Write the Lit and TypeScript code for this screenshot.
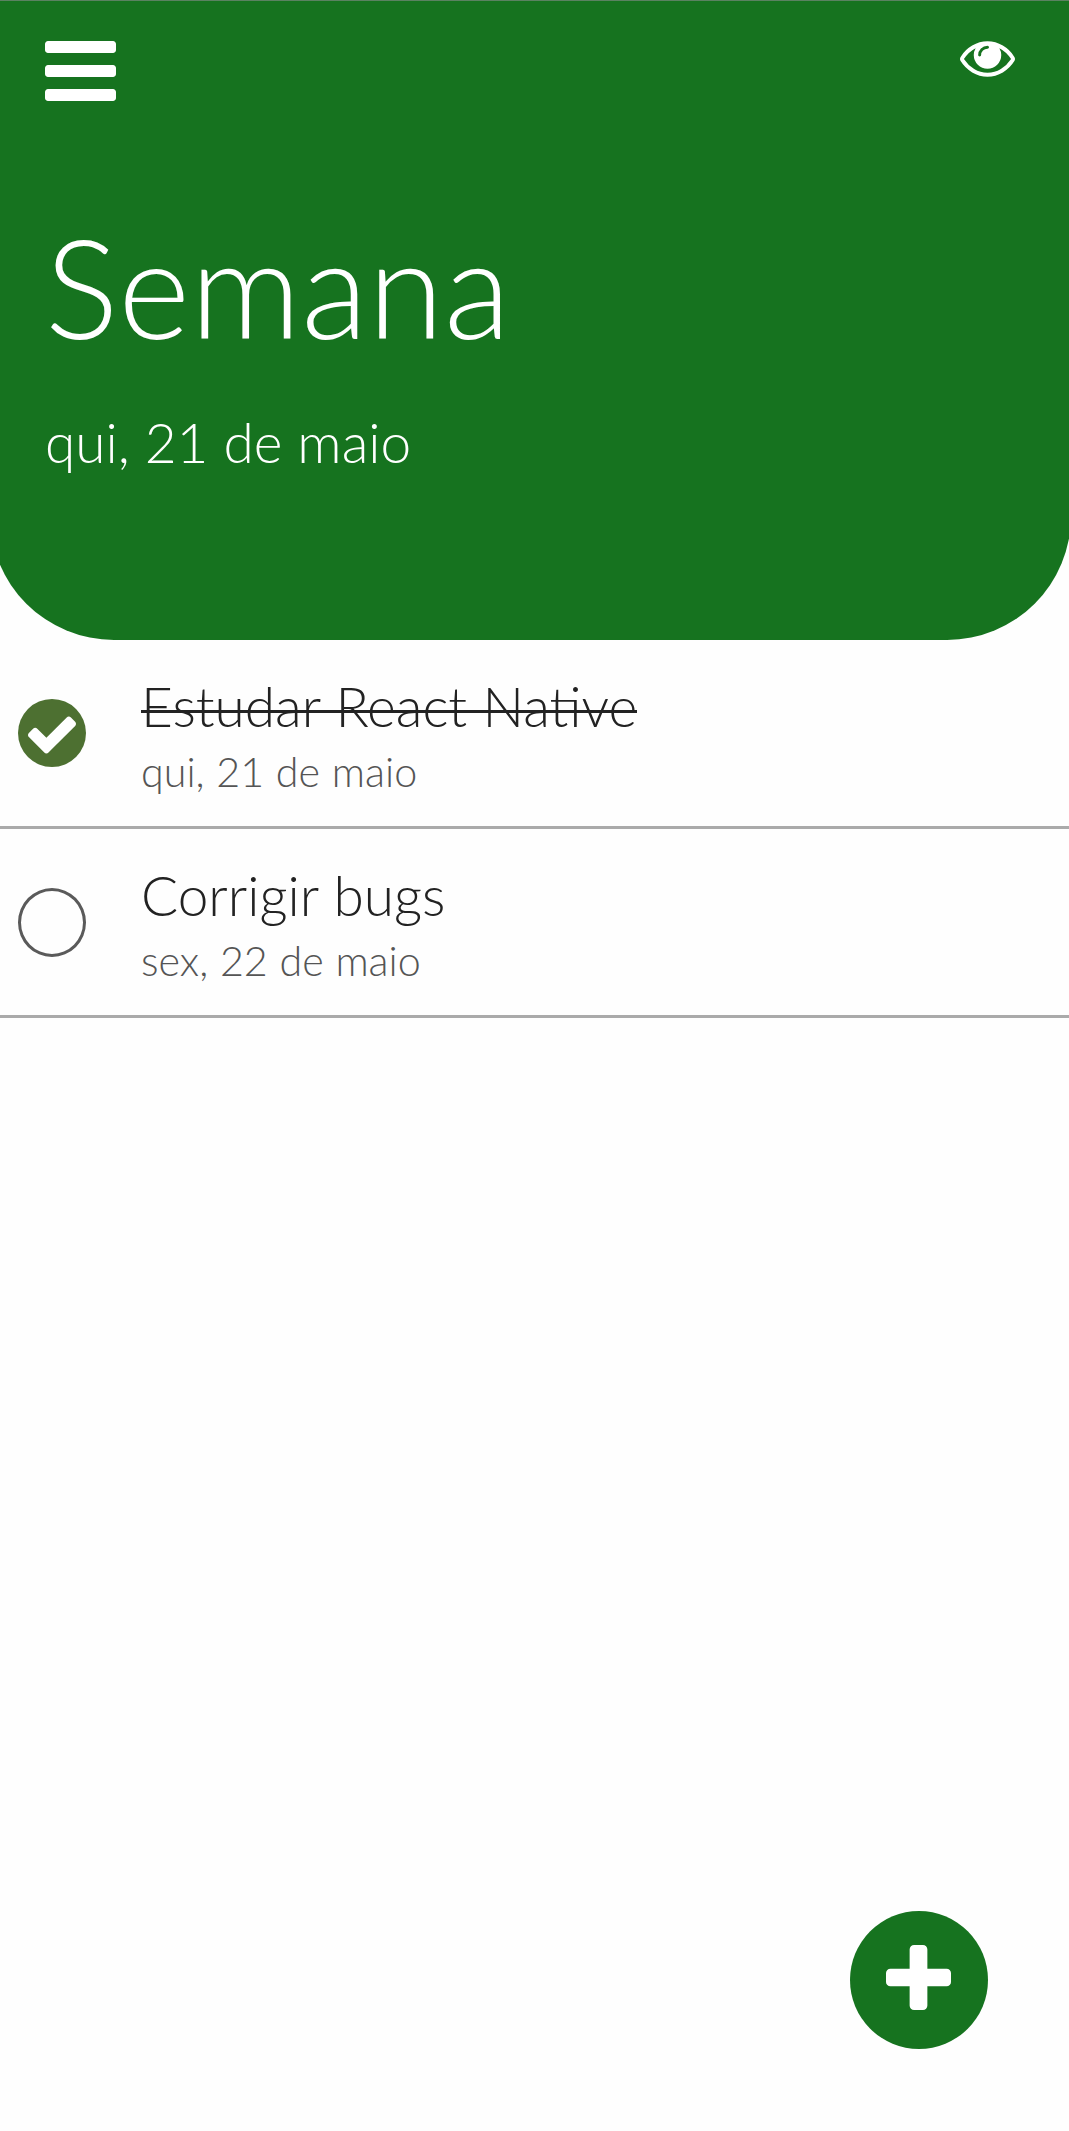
import { LitElement, html, css, nothing } from "lit";
import { customElement, property, state } from "lit/decorators.js";

interface Task {
  id: number;
  desc: string;
  date: string;
  done: boolean;
}

@customElement("task-row")
class TaskRow extends LitElement {
  @property({ attribute: false }) task!: Task;

  static styles = css`
    :host {
      display: block;
    }
    .row {
      box-sizing: border-box;
      height: 189px;
      display: flex;
      align-items: center;
      border-bottom: 3px solid #aaa;
    }
    .check {
      flex: none;
      width: 141px;
      padding-left: 18px;
      box-sizing: border-box;
    }
    .mark {
      box-sizing: border-box;
      width: 68px;
      height: 68px;
      border-radius: 50%;
      display: flex;
      align-items: center;
      justify-content: center;
    }
    .pending {
      height: 69px;
      border: 3px solid #5a5a5a;
    }
    .done {
      background: #4d7031;
    }
    .tick {
      display: block;
      width: 48px;
      height: 38px;
      margin-top: 3px;
      fill: #fff;
    }
    .text {
      display: flex;
      flex-direction: column;
      align-items: flex-start;
      padding-top: 3px;
      word-spacing: 0.5px;
    }
    .desc {
      font-size: 55px;
      line-height: 66px;
      color: #222;
      white-space: pre;
    }
    .struck {
      background: linear-gradient(#222, #222) 0 37px / 100% 3px no-repeat;
    }
    .date {
      margin-top: 7px;
      font-size: 41.25px;
      line-height: 50px;
      color: #555;
      white-space: pre;
    }
  `;

  render() {
    const { desc, date, done } = this.task;
    return html`
      <div class="row">
        <div class="check">
          <div class="mark ${done ? "done" : "pending"}">
            ${done
              ? html`<svg class="tick" viewBox="121 334 1550 1188">
                  <path
                    d="M1671 566q0 40-28 68l-724 724-136 136q-28 28-68 28t-68-28l-136-136-362-362q-28-28-28-68t28-68l136-136q28-28 68-28t68 28l294 295 656-657q28-28 68-28t68 28l136 136q28 28 28 68z"
                  />
                </svg>`
              : nothing}
          </div>
        </div>
        <div class="text">
          <span class="desc ${done ? "struck" : ""}">${desc}</span>
          <span class="date">${date}</span>
        </div>
      </div>
    `;
  }
}

@customElement("app-root")
class AppRoot extends LitElement {
  @state() private tasks: Task[] = [
    { id: 1, desc: "Estudar React Native", date: "qui, 21 de maio", done: true },
    { id: 2, desc: "Corrigir bugs", date: "sex, 22 de maio", done: false },
  ];

  static styles = css`
    :host {
      display: block;
      position: relative;
      height: 2131px;
      overflow: hidden;
      background: #fefefe;
      font-family: Lato, sans-serif;
      font-weight: 300;
    }
    .header {
      box-sizing: border-box;
      height: 640px;
      margin: 0 -2px 0 -10px;
      padding: 40px 56px 0 55px;
      border-top: 1px solid #5b8261;
      border-radius: 0 0 124px 124px;
      background: #16731f;
      color: #fff;
    }
    .bar {
      display: flex;
      justify-content: space-between;
      align-items: flex-start;
      height: 162px;
    }
    .menu {
      display: block;
      width: 71px;
      height: 60px;
      fill: #fff;
    }
    .eye {
      display: block;
      width: 55px;
      height: 36px;
      fill: #fff;
    }
    .title {
      margin: 0;
      font-size: 137.5px;
      font-weight: 300;
      line-height: 165px;
      letter-spacing: 0.3px;
    }
    .today {
      margin: 41px 0 0;
      font-size: 55px;
      line-height: 66px;
    }
    .add {
      position: absolute;
      right: 81px;
      bottom: 82px;
      width: 138px;
      height: 138px;
      padding: 0 1px 5px 0;
      box-sizing: border-box;
      border: 0;
      border-radius: 50%;
      background: #16731f;
      display: flex;
      align-items: center;
      justify-content: center;
    }
    .plus {
      display: block;
      width: 65px;
      height: 65px;
      fill: #fff;
    }
  `;

  render() {
    return html`
      <header class="header">
        <div class="bar">
          <svg class="menu" viewBox="128 256 1536 1280" preserveAspectRatio="none">
            <path
              d="M1664 1344v128q0 26-19 45t-45 19h-1408q-26 0-45-19t-19-45v-128q0-26 19-45t45-19h1408q26 0 45 19t19 45zm0-512v128q0 26-19 45t-45 19h-1408q-26 0-45-19t-19-45v-128q0-26 19-45t45-19h1408q26 0 45 19t19 45zm0-512v128q0 26-19 45t-45 19h-1408q-26 0-45-19t-19-45v-128q0-26 19-45t45-19h1408q26 0 45 19t19 45z"
            />
          </svg>
          <svg class="eye" viewBox="0 384 1792 1152">
            <path
              d="M1664 960q-152-236-381-353 61 104 61 225 0 185-131.5 316.5t-316.5 131.5-316.5-131.5-131.5-316.5q0-121 61-225-229 117-381 353 133 205 333.5 326.5t434.5 121.5 434.5-121.5 333.5-326.5zm-720-384q0-20-14-34t-34-14q-125 0-214.5 89.5t-89.5 214.5q0 20 14 34t34 14 34-14 14-34q0-86 61-147t147-61q20 0 34-14t14-34zm848 384q0 34-20 69-140 230-376.5 368.5t-499.5 138.5-499.5-139-376.5-368q-20-35-20-69t20-69q140-229 376.5-368t499.5-139 499.5 139 376.5 368q20 35 20 69z"
            />
          </svg>
        </div>
        <h1 class="title">Semana</h1>
        <p class="today">qui, 21 de maio</p>
      </header>
      <main>${this.tasks.map((t) => html`<task-row .task=${t}></task-row>`)}</main>
      <button class="add">
        <svg class="plus" viewBox="192 128 1408 1408">
          <path
            d="M1600 736v192q0 40-28 68t-68 28h-416v416q0 40-28 68t-68 28h-192q-40 0-68-28t-28-68v-416h-416q-40 0-68-28t-28-68v-192q0-40 28-68t68-28h416v-416q0-40 28-68t68-28h192q40 0 68 28t28 68v416h416q40 0 68 28t28 68z"
          />
        </svg>
      </button>
    `;
  }
}
